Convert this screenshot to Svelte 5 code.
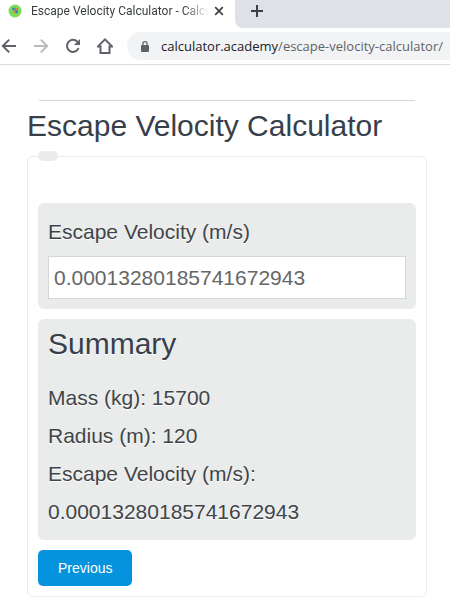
<script>
  let velocity = $state('0.00013280185741672943');
  let address = $state('calculator.academy/escape-velocity-calculator/');
  const slash = $derived(address.indexOf('/'));
  const mass = 15700;
  const radius = 120;
</script>

<div class="browser">
  <div class="tabs">
    <div class="tab">
      <svg class="favicon" viewBox="0 0 14 14" aria-hidden="true">
        <circle cx="7" cy="7" r="6.5" fill="#7ed957" />
        <path d="M4 4.2 6.6 3.4 7 6 4.6 6.4z" fill="#2f86c9" />
        <path d="M7 3.6 10 4.4 9.6 6.6 7 6z" fill="#e0703a" />
        <path d="M4.8 6.6 7 6.2 7.4 8.6 5.8 9z" fill="#d98245" />
        <path d="M7.2 6.4 9.8 6.6 9.6 9.6 7.4 9z" fill="#2c7fb8" />
      </svg>
      <span class="title">Escape Velocity Calculator - Calcu</span>
      <button class="plain" aria-label="Close tab">
        <svg width="10" height="10" viewBox="0 0 10 10"><path d="M1.2 1.2 8.8 8.8M8.8 1.2 1.2 8.8" stroke="#3c4043" stroke-width="1.7" /></svg>
      </button>
    </div>
    <div class="strip">
      <button class="plain" aria-label="New tab">
        <svg width="12" height="12" viewBox="0 0 12 12"><path d="M6 0V12M0 6H12" stroke="#3c4043" stroke-width="2" /></svg>
      </button>
    </div>
  </div>

  <div class="toolbar">
    <button class="plain" aria-label="Back">
      <svg width="16" height="16" viewBox="0 0 16 16" fill="none" stroke="#5f6368" stroke-width="2"><path d="M15 8H2.4M8.2 1.6 1.8 8 8.2 14.4" /></svg>
    </button>
    <button class="plain" aria-label="Forward">
      <svg width="16" height="16" viewBox="0 0 16 16" fill="none" stroke="#babcbe" stroke-width="2"><path d="M1 8H13.6M7.8 1.6 14.2 8 7.8 14.4" /></svg>
    </button>
    <button class="plain" aria-label="Reload">
      <svg width="16" height="16" viewBox="0 0 16 16"><path d="M13.6 10A6 6 0 1 1 12.4 3.8" fill="none" stroke="#5f6368" stroke-width="2" /><path d="M15 1V7H9z" fill="#5f6368" /></svg>
    </button>
    <button class="plain" aria-label="Home">
      <svg width="16" height="16" viewBox="0 0 16 16" fill="none" stroke="#5f6368" stroke-width="2"><path d="M.8 8.6H3.5V15H12.5V8.6H15.2L8 1.4z" /></svg>
    </button>
    <div class="address">
      <svg width="8" height="11" viewBox="0 0 8 11" aria-hidden="true"><rect y="4" width="8" height="7" rx="1" fill="#5f6368" /><path d="M1.9 4.5V2.8a2.1 2.1 0 0 1 4.2 0V4.5" fill="none" stroke="#5f6368" stroke-width="1.3" /></svg>
      <a href="#top">{address.slice(0, slash)}<span>{address.slice(slash)}</span></a>
    </div>
  </div>
</div>

<main id="top">
  <hr />
  <h1>Escape Velocity Calculator</h1>
  <form onsubmit={(e) => e.preventDefault()}>
    <div class="progress"></div>
    <section class="field">
      <label for="velocity">Escape Velocity (m/s)</label>
      <input id="velocity" type="text" bind:value={velocity} />
    </section>
    <section class="summary">
      <h2>Summary</h2>
      <p>Mass (kg): {mass}</p>
      <p>Radius (m): {radius}</p>
      <p>Escape Velocity (m/s): {velocity}</p>
    </section>
    <button class="previous" type="button">Previous</button>
  </form>
</main>

<style>
  :global(body) {
    margin: 0;
    background: #fff;
  }
  .browser {
    font-family: "Open Sans", "Noto Sans", sans-serif;
    border-bottom: 1px solid #dadce0;
    overflow: hidden;
  }
  .plain {
    display: flex;
    flex: none;
    padding: 0;
    border: 0;
    background: none;
  }
  .tabs {
    display: flex;
    height: 28px;
    background: #fff;
  }
  .tab {
    display: flex;
    align-items: center;
    flex: none;
    box-sizing: border-box;
    width: 235px;
    padding: 0 11px 6px 8px;
  }
  .favicon {
    flex: none;
    width: 14px;
    height: 14px;
    margin-right: 9px;
  }
  .title {
    flex: 1;
    min-width: 0;
    margin-right: 5px;
    white-space: nowrap;
    font-family: Roboto, "Open Sans", sans-serif;
    font-size: 12px;
    line-height: 18px;
    color: #3c4043;
    mask-image: linear-gradient(to right, #000 86%, transparent);
  }
  .strip {
    display: flex;
    align-items: center;
    flex: 1;
    padding: 0 16px 6px;
    border-bottom-left-radius: 8px;
    background: #dee1e6;
  }
  .toolbar {
    display: flex;
    align-items: center;
    gap: 16px;
    height: 36px;
    padding-left: 1px;
  }
  .address {
    display: flex;
    align-items: center;
    flex: 1;
    min-width: 0;
    gap: 12px;
    height: 28px;
    margin-left: -2px;
    padding-left: 14px;
    border-radius: 14px 0 0 14px;
    background: #f1f3f4;
    overflow: hidden;
  }
  .address svg {
    flex: none;
  }
  .address a {
    white-space: nowrap;
    font-size: 13px;
    line-height: 20px;
    color: #202124;
    text-decoration: none;
  }
  .address span {
    color: #5f6368;
  }
  main {
    padding: 35px 23px 8px 27px;
    font-family: "Liberation Sans", Arial, sans-serif;
    font-size: 21px;
    line-height: 38px;
    color: #3f4549;
  }
  hr {
    height: 1px;
    margin: 0 12px;
    border: 0;
    background: #d5d6d7;
  }
  h1,
  h2 {
    margin: 0;
    font-size: 30px;
    font-weight: 400;
    line-height: 36px;
    color: #37404a;
  }
  h1 {
    margin: 7px 0 12px;
  }
  form {
    padding: 0 10px 10px;
    border: 1px solid #eaeceb;
    border-radius: 6px;
  }
  .progress {
    width: 20px;
    height: 10px;
    margin: -6px 0 42px;
    border-radius: 5px;
    background: #eaeceb;
  }
  section {
    margin-bottom: 10px;
    padding: 10px;
    border-radius: 6px;
    background: #eaeceb;
    text-shadow: 0 1px 0 #fff;
  }
  label {
    display: block;
    margin-bottom: 5px;
  }
  input {
    display: block;
    box-sizing: border-box;
    width: 100%;
    height: 43px;
    padding: 0 5px;
    border: 1px solid #d5d8d6;
    background: #fff;
    font: inherit;
    color: #666;
  }
  .summary {
    padding: 7px 10px 9px;
  }
  h2 {
    margin-bottom: 17px;
  }
  p {
    margin: 0;
  }
  .previous {
    display: block;
    height: 36px;
    padding: 0 20px;
    border: 0;
    border-radius: 5px;
    background: #0693de;
    font: 14px/34px "Liberation Sans", Arial, sans-serif;
    color: #fff;
  }
</style>
